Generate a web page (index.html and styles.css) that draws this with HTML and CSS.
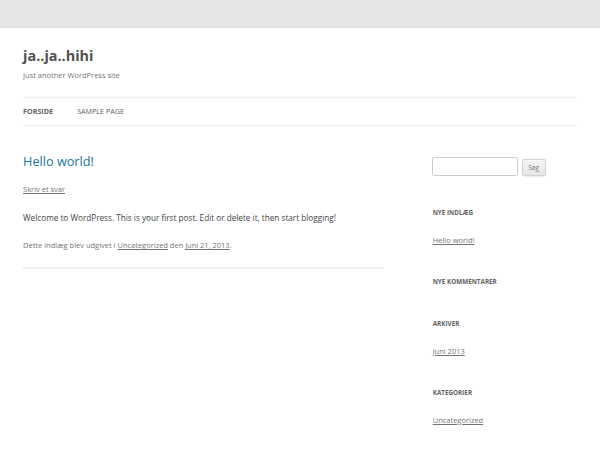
FILE: index.html
```html
<!DOCTYPE html>
<html lang="da">
<head>
<meta charset="utf-8">
<title>ja..ja..hihi</title>
<link rel="stylesheet" href="styles.css">
</head>
<body>
<div class="site">
  <header class="site-header">
    <h1 class="site-title"><a href="#">ja..ja..hihi</a></h1>
    <h2 class="site-description">Just another WordPress site</h2>
    <nav class="main-navigation">
      <ul class="nav-menu">
        <li class="current"><a href="#">Forside</a></li>
        <li><a href="#">Sample Page</a></li>
      </ul>
    </nav>
  </header>
  <div class="main">
    <div class="site-content">
      <article class="hentry">
        <header class="entry-header">
          <h1 class="entry-title"><a href="#">Hello world!</a></h1>
          <div class="comments-link"><a href="#">Skriv et svar</a></div>
        </header>
        <div class="entry-content">
          <p>Welcome to WordPress. This is your first post. Edit or delete it, then start blogging!</p>
        </div>
        <footer class="entry-meta">Dette indlæg blev udgivet i <a href="#">Uncategorized</a> den <a href="#">juni 21, 2013</a>.</footer>
      </article>
    </div>
    <aside class="widget-area">
      <div class="widget widget-search">
        <form class="searchform">
          <input class="search-input" type="text"><button class="search-submit" type="button">Søg</button>
        </form>
      </div>
      <div class="widget">
        <h3 class="widget-title">Nye indlæg</h3>
        <ul class="widget-list"><li><a href="#">Hello world!</a></li></ul>
      </div>
      <div class="widget">
        <h3 class="widget-title">Nye kommentarer</h3>
        <ul class="widget-list"></ul>
      </div>
      <div class="widget">
        <h3 class="widget-title">Arkiver</h3>
        <ul class="widget-list"><li><a href="#">juni 2013</a></li></ul>
      </div>
      <div class="widget">
        <h3 class="widget-title">Kategorier</h3>
        <ul class="widget-list"><li><a href="#">Uncategorized</a></li></ul>
      </div>
    </aside>
  </div>
</div>
</body>
</html>
```

FILE: styles.css
```css
html {
  zoom: 0.5769;
  overflow: hidden;
}
body {
  margin: 0;
  background: #e6e6e6;
  font-family: "Open Sans", "Noto Sans", sans-serif;
  font-size: 14px;
  line-height: 1.714285714;
  color: #444;
}
a {
  color: #21759b;
}
ul {
  list-style: none;
  margin: 0;
  padding: 0;
}
h1, h2, h3, p {
  margin: 0;
}
.site {
  margin-top: 48px;
  padding: 0 40px;
  background: #fff;
  box-shadow: 0 2px 6px rgba(100, 100, 100, 0.3);
  min-height: 750px;
}
.site-header {
  padding: 24px 0;
}
.site-title {
  font-size: 25px;
  line-height: 48px;
  font-weight: bold;
}
.site-title a {
  color: #515151;
  text-decoration: none;
}
.site-description {
  font-size: 13px;
  line-height: 1.846153846;
  font-weight: normal;
  color: #757575;
}
.main-navigation {
  margin-top: 24px;
}
.nav-menu {
  display: flex;
  border-top: 1px solid #ededed;
  border-bottom: 1px solid #ededed;
}
.nav-menu li {
  margin-right: 42px;
  font-size: 12.4px;
  line-height: 47px;
  text-transform: uppercase;
}
.nav-menu a {
  color: #5e5e5e;
  text-decoration: none;
}
.nav-menu .current a {
  color: #636363;
  font-weight: bold;
}
.main {
  display: flex;
  justify-content: space-between;
  align-items: flex-start;
}
.site-content {
  width: 65.104166667%;
  margin-top: 25px;
}
.widget-area {
  width: 26.041666667%;
  margin-top: 24px;
}
.hentry {
  padding-bottom: 24px;
  border-bottom: 4px double #ededed;
}
.entry-header {
  margin-bottom: 24px;
}
.entry-title {
  font-size: 22px;
  line-height: 1.2;
  font-weight: normal;
}
.entry-title a {
  color: #21759b;
  text-decoration: none;
}
.comments-link {
  margin-top: 24px;
  font-size: 13px;
  line-height: 1.846153846;
}
.comments-link a,
.entry-meta a,
.widget a {
  color: #757575;
}
.entry-content {
  font-size: 14.2px;
}
.entry-content p {
  margin-bottom: 24px;
}
.entry-meta {
  margin-top: 25px;
  font-size: 13px;
  line-height: 1.846153846;
  color: #757575;
}
.widget {
  margin-bottom: 48px;
  font-size: 13px;
  line-height: 1.846153846;
}
.widget-search {
  margin-bottom: 52px;
}
.searchform {
  display: flex;
  align-items: center;
  gap: 7px;
  padding-top: 6px;
}
.search-input {
  box-sizing: border-box;
  width: 148px;
  height: 33px;
  padding: 6px;
  border: 1px solid #ccc;
  border-radius: 3px;
  font-family: inherit;
  font-size: 14px;
  margin: 0 0 0 -1px;
}
.search-submit {
  box-sizing: border-box;
  height: 30px;
  padding: 6px 10px;
  margin: 2px 0 0;
  font-family: inherit;
  font-size: 11px;
  line-height: 1.428571429;
  color: #7c7c7c;
  background: linear-gradient(to bottom, #f4f4f4, #e6e6e6);
  border: 1px solid #d2d2d2;
  border-radius: 3px;
  box-shadow: 0 1px 2px rgba(64, 64, 64, 0.1);
}
.widget-title {
  font-size: 11px;
  line-height: 2.181818182;
  font-weight: bold;
  text-transform: uppercase;
  color: #636363;
  margin-bottom: 24px;
}
```
